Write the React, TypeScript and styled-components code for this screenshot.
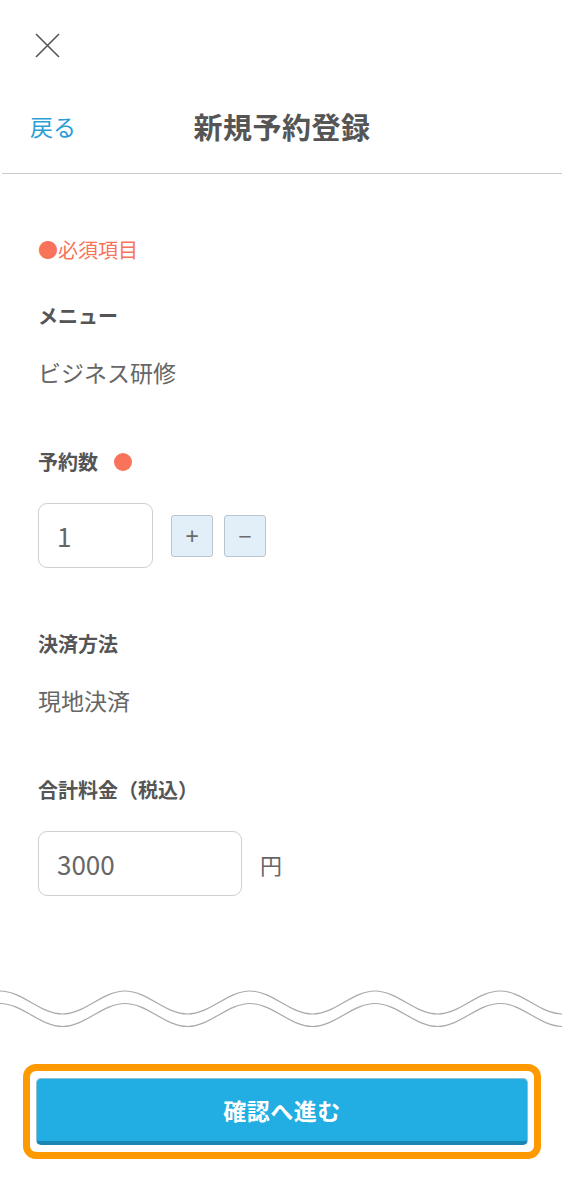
import React from 'react'
import styled, { createGlobalStyle } from 'styled-components'

const GlobalStyle = createGlobalStyle`
  html, body {
    margin: 0;
    padding: 0;
    background: #fff;
  }
  body {
    font-family: "Noto Sans CJK JP", "Noto Sans", sans-serif;
    color: #555;
  }
`

const Page = styled('div')`
  width: 562px;
  min-height: 1197px;
  background: #fff;
  overflow: hidden;
`

const CloseRow = styled('div')`
  height: 90px;
  display: flex;
  align-items: center;
  padding-left: 34px;
`

const CloseButton = styled('button')`
  width: 26px;
  height: 26px;
  padding: 0;
  border: none;
  background: none;
  display: flex;
  align-items: center;
  justify-content: center;
`

const Header = styled('div')`
  height: 84px;
  padding-bottom: 12px;
  margin-left: 2px;
  display: grid;
  grid-template-columns: 1fr auto 1fr;
  align-items: center;
  border-bottom: 1.5px solid #c9cccc;
  box-sizing: border-box;
`

const BackLink = styled('a')`
  justify-self: start;
  padding-left: 28px;
  font-size: 23px;
  color: #2a9fd6;
  text-decoration: none;
`

const Title = styled('h1')`
  margin: 0;
  font-size: 29px;
  font-weight: bold;
  color: #555;
  letter-spacing: 0.5px;
`

const Form = styled('div')`
  padding: 0 38px;
`

const RequiredNote = styled('p')`
  margin: 62px 0 0;
  line-height: 28px;
  font-size: 20px;
  color: #f8735a;
`

const Field = styled('div')`
  margin-top: 38px;
  & + & {
    margin-top: 62px;
  }
`

const Label = styled('div')`
  display: flex;
  align-items: center;
  gap: 16px;
  line-height: 28px;
  font-size: 20px;
  font-weight: bold;
  color: #555;
`

const Dot = styled('span')`
  width: 18px;
  height: 18px;
  border-radius: 50%;
  background: #f8735a;
`

const Value = styled('div')`
  margin-top: 28px;
  line-height: 28px;
  font-size: 23px;
  color: #666;
`

const InputRow = styled('div')`
  margin-top: 27px;
  display: flex;
  align-items: center;
  gap: 18px;
`

const TextInput = styled('input')<{ w: number }>`
  width: ${p => p.w}px;
  height: 65px;
  box-sizing: border-box;
  border: 1.5px solid #cfcfcf;
  border-radius: 9px;
  padding: 0 0 0 18px;
  font-family: "Noto Sans CJK JP", "Noto Sans", sans-serif;
  font-size: 26px;
  color: #666;
  outline: none;
`

const Steppers = styled('div')`
  display: flex;
  gap: 11px;
`

const StepButton = styled('button')`
  width: 42px;
  height: 42px;
  padding: 0;
  border: 1.5px solid #b9c4cc;
  border-radius: 3px;
  background: #e2eff8;
  color: #6a6a6a;
  font-family: "Noto Sans", sans-serif;
  font-size: 24px;
  line-height: 1;
  display: flex;
  align-items: center;
  justify-content: center;
`

const Unit = styled('span')`
  font-size: 22px;
  color: #666;
`

const Wave = styled('svg')`
  display: block;
  margin-top: 88px;
`

const Footer = styled('div')`
  padding: 28px 21px 0 23px;
`

const Focus = styled('div')`
  border: 7px solid #fe9900;
  border-radius: 13px;
  padding: 7px 6px;
`

const SubmitButton = styled('button')`
  width: 100%;
  height: 67px;
  border: 1px solid #8fbfd6;
  border-bottom: 4px solid #1a86b3;
  border-radius: 5px;
  background: #22aee3;
  color: #fff;
  font-family: "Noto Sans CJK JP", "Noto Sans", sans-serif;
  font-size: 23px;
  font-weight: bold;
  letter-spacing: 0.5px;
`

const wavePath = (y: number) => {
  const p = 125
  const h = p / 2
  const a = 11.5
  let d = `M-${p} ${y - a}`
  for (let x = -p; x < 620; x += h) {
    const even = Math.round((x + p) / h) % 2 === 0
    const y0 = even ? y - a : y + a
    const y1 = even ? y + a : y - a
    d += ` C${x + h * 0.36} ${y0} ${x + h * 0.64} ${y1} ${x + h} ${y1}`
  }
  return d
}

export default function App() {
  return (
    <Page>
      <GlobalStyle />
      <CloseRow>
        <CloseButton aria-label="閉じる">
          <svg width="25" height="25" viewBox="0 0 25 25">
            <path d="M1 1 L24 24 M24 1 L1 24" stroke="#555" strokeWidth="1.6" fill="none" />
          </svg>
        </CloseButton>
      </CloseRow>
      <Header>
        <BackLink href="#">戻る</BackLink>
        <Title>新規予約登録</Title>
        <span />
      </Header>
      <Form>
        <RequiredNote>●必須項目</RequiredNote>
        <Field>
          <Label>メニュー</Label>
          <Value>ビジネス研修</Value>
        </Field>
        <Field>
          <Label>
            予約数
            <Dot />
          </Label>
          <InputRow>
            <TextInput w={115} defaultValue="1" />
            <Steppers>
              <StepButton>+</StepButton>
              <StepButton>−</StepButton>
            </Steppers>
          </InputRow>
        </Field>
        <Field>
          <Label>決済方法</Label>
          <Value>現地決済</Value>
        </Field>
        <Field>
          <Label>合計料金（税込）</Label>
          <InputRow>
            <TextInput w={204} defaultValue="3000" />
            <Unit>円</Unit>
          </InputRow>
        </Field>
      </Form>
      <Wave width="562" height="52" viewBox="0 0 562 52">
        <path d={wavePath(18.5)} stroke="#aaa" strokeWidth="1.2" fill="none" />
        <path d={wavePath(31)} stroke="#aaa" strokeWidth="1.2" fill="none" />
      </Wave>
      <Footer>
        <Focus>
          <SubmitButton>確認へ進む</SubmitButton>
        </Focus>
      </Footer>
    </Page>
  )
}
